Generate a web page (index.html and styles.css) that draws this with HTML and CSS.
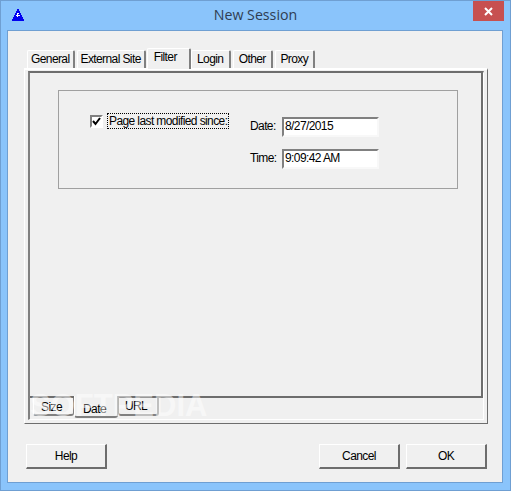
FILE: index.html
```html
<!DOCTYPE html>
<html lang="en">
<head>
  <meta charset="UTF-8" />
  <title>New Session</title>
  <link rel="stylesheet" href="styles.css">
</head>
<body>
  <div class="window">
    <div class="titlebar">
      <svg class="app-icon" width="12" height="12" viewBox="0 0 12 12" shape-rendering="crispEdges">
        <path d="M5 0h2v2h1v2h1v2h1v2h1v2h1v2H0v-2h1V8h1V6h1V4h1V2h1z" fill="#0000f0"/>
        <path d="M5 4h2v1H6v1h2v1H6v1H5V7H4V6h1z" fill="#fff"/>
      </svg>
      <div class="title">New Session</div>
      <div class="close">
        <svg width="9" height="9" viewBox="0 0 9 9"><path d="M1 1 L8 8 M8 1 L1 8" stroke="#fff" stroke-width="2"/></svg>
      </div>
    </div>
    <div class="client">
      <div class="tabs">
        <div class="tab">General</div>
        <div class="tab">External Site</div>
        <div class="tab active">Filter</div>
        <div class="tab">Login</div>
        <div class="tab">Other</div>
        <div class="tab">Proxy</div>
      </div>
      <div class="outer">
        <div class="inner">
          <div class="page">
            <div class="group">
              <div class="check-col">
                <span class="checkbox">
                  <svg width="9" height="9" viewBox="0 0 9 9"><path d="M1 4 L3.5 7 L8 1" fill="none" stroke="#000" stroke-width="2"/></svg>
                </span>
                <span class="check-label">Page last modified since:</span>
              </div>
              <div class="fields">
                <div class="field"><label>Date:</label><div class="input">8/27/2015</div></div>
                <div class="field"><label>Time:</label><div class="input">9:09:42 AM</div></div>
              </div>
            </div>
          </div>
          <div class="subtabs">
            <div class="subtab">Size</div>
            <div class="subtab active">Date</div>
            <div class="subtab last">URL</div>
          </div>
        </div>
      </div>
      <div class="buttons">
        <div class="button">Help</div>
        <div class="spacer"></div>
        <div class="button">Cancel</div>
        <div class="button">OK</div>
      </div>
      <div class="watermark">SOFTPEDIA</div>
    </div>
  </div>
</body>
</html>
```

FILE: styles.css
```css
* {
  box-sizing: border-box;
}
body {
  margin: 0;
  font-family: "Liberation Sans", Arial, sans-serif;
  font-size: 12px;
  letter-spacing: -0.6px;
  color: #000;
}
.window {
  width: 511px;
  height: 491px;
  background: #8ac4fb;
  border: 1px solid #6f9fd2;
  display: flex;
  flex-direction: column;
  padding: 0 7px 7px 6px;
}
.titlebar {
  height: 29px;
  display: flex;
  position: relative;
  padding: 8px 0 0 5px;
}
.app-icon {
  display: block;
}
.title {
  position: absolute;
  left: 1px;
  right: 0;
  top: 4px;
  text-align: center;
  font-family: "Open Sans", sans-serif;
  font-size: 14.2px;
  letter-spacing: 0;
  color: #2f3d52;
}
.close {
  position: absolute;
  right: -1px;
  top: 0;
  width: 31px;
  height: 20px;
  background: #c75050;
  display: flex;
  align-items: center;
  justify-content: center;
}
.client {
  flex: 1;
  background: #f0f0f0;
  border: 1px solid #6f9fd2;
  padding: 17px 14px 0 16px;
  position: relative;
  display: flex;
  flex-direction: column;
}
.tabs {
  display: flex;
  height: 20px;
  align-items: flex-end;
  padding-left: 3px;
  position: relative;
  z-index: 1;
}
.tab {
  height: 18px;
  min-width: 40px;
  padding: 1px 3px 0 3px;
  border: 1px solid #fff;
  border-bottom: 0;
  border-right: 2px solid #808080;
  border-radius: 2px 2px 0 0;
  margin-right: 2px;
  text-align: center;
  line-height: 14px;
}
.tab.active {
  height: 21px;
  min-width: 44px;
  margin: 0 0 -1px -1px;
  padding: 1px 0 0 6px;
  background: #f0f0f0;
  text-align: left;
}
.outer {
  height: 356px;
  border: 1px solid;
  border-color: #fff #6d6d6d #6d6d6d #fff;
  border-top-width: 2px;
  padding: 1px 3px 3px 3px;
}
.inner {
  height: 100%;
  border-style: solid;
  border-width: 2px 1px 1px 2px;
  border-color: #6d6d6d #fff #fff #808080;
  display: flex;
  flex-direction: column;
}
.page {
  flex: 1;
  border-right: 2px solid #6d6d6d;
  border-bottom: 2px solid #6d6d6d;
}
.group {
  width: 400px;
  height: 99px;
  margin: 17px 0 0 28px;
  border: 1px solid #a0a0a0;
  display: flex;
  padding: 22px 0 0 31px;
}
.check-col {
  display: flex;
  align-items: flex-start;
  width: 160px;
}
.checkbox {
  width: 13px;
  height: 13px;
  margin-top: 2px;
  background: #fff;
  border: 2px solid;
  border-color: #808080 #fff #fff #808080;
  display: flex;
  align-items: center;
  justify-content: center;
}
.check-label {
  margin-left: 4px;
  padding: 0 1px;
  height: 16px;
  line-height: 14px;
  border: 1px dotted #000;
  white-space: nowrap;
}
.fields {
  display: flex;
  flex-direction: column;
  gap: 12px;
  padding-top: 4px;
}
.field {
  display: flex;
  align-items: center;
  gap: 7px;
}
.field label {
  width: 25px;
  padding-bottom: 2px;
  white-space: nowrap;
}
.input {
  width: 97px;
  height: 20px;
  background: #fff;
  border: 2px solid;
  border-color: #808080 #f8f8f8 #f8f8f8 #808080;
  padding: 0 0 0 1px;
  line-height: 15px;
}
.subtabs {
  display: flex;
  align-items: flex-start;
  height: 21px;
  padding-left: 3px;
}
.subtab {
  width: 41px;
  height: 18px;
  padding-right: 4px;
  border: 1px solid #808080;
  border-top: 0;
  border-left-color: #fff;
  border-bottom-width: 2px;
  border-radius: 0 0 3px 3px;
  text-align: center;
  line-height: 19px;
}
.subtab.active {
  width: 44px;
  height: 22px;
  margin-top: -2px;
  padding-right: 3px;
  line-height: 27px;
  background: #f0f0f0;
}
.subtab.last {
  border-left-color: #6d6d6d;
  border-right-width: 2px;
  line-height: 17px;
}
.buttons {
  display: flex;
  gap: 6px;
  margin-top: 20px;
  padding: 0 1px 0 2px;
}
.spacer {
  flex: 1;
}
.button {
  width: 81px;
  height: 25px;
  border: 1px solid;
  border-color: #fff #6d6d6d #6d6d6d #fff;
  border-right-width: 2px;
  border-bottom-width: 2px;
  text-align: center;
  line-height: 23px;
}
.watermark {
  position: absolute;
  left: 22px;
  top: 357px;
  font-size: 31px;
  font-weight: bold;
  letter-spacing: 0;
  color: #fff;
  opacity: 0.5;
  pointer-events: none;
}
```
